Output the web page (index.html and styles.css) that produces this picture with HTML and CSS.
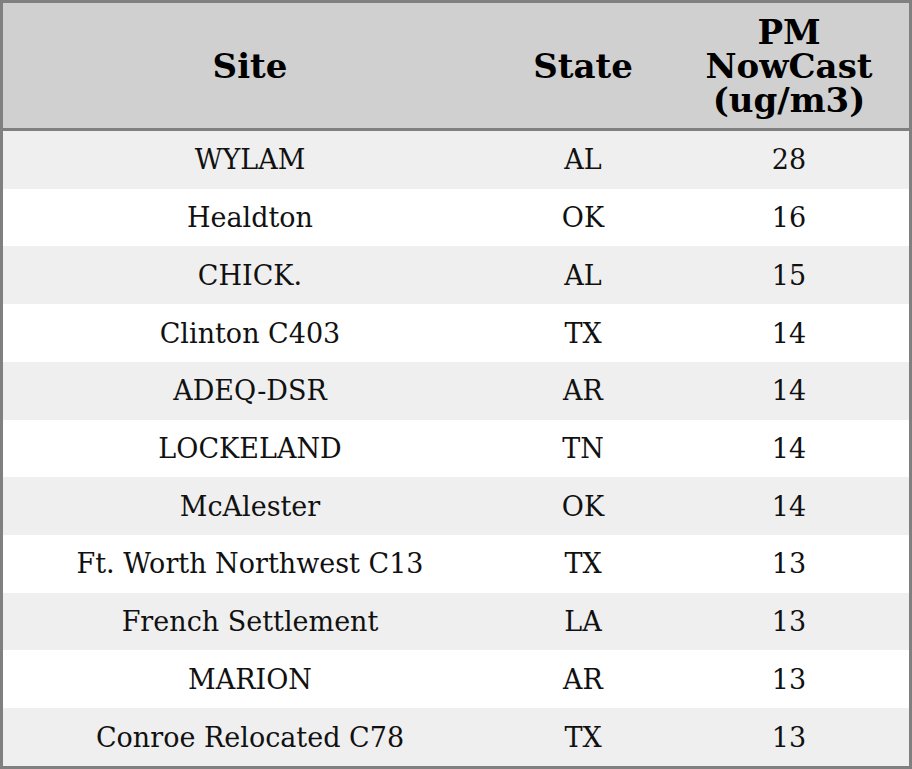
FILE: index.html
```html
<!DOCTYPE html>
<html>
<head>
<meta charset="utf-8">
<link rel="stylesheet" href="styles.css">
</head>
<body>
<table class="aq">
  <colgroup>
    <col class="c-site">
    <col class="c-state">
    <col class="c-pm">
  </colgroup>
  <thead>
    <tr><th>Site</th><th>State</th><th>PM<br>NowCast<br>(ug/m3)</th></tr>
  </thead>
  <tbody>
    <tr><td>WYLAM</td><td>AL</td><td>28</td></tr>
    <tr><td>Healdton</td><td>OK</td><td>16</td></tr>
    <tr><td>CHICK.</td><td>AL</td><td>15</td></tr>
    <tr><td>Clinton C403</td><td>TX</td><td>14</td></tr>
    <tr><td>ADEQ-DSR</td><td>AR</td><td>14</td></tr>
    <tr><td>LOCKELAND</td><td>TN</td><td>14</td></tr>
    <tr><td>McAlester</td><td>OK</td><td>14</td></tr>
    <tr><td>Ft. Worth Northwest C13</td><td>TX</td><td>13</td></tr>
    <tr><td>French Settlement</td><td>LA</td><td>13</td></tr>
    <tr><td>MARION</td><td>AR</td><td>13</td></tr>
    <tr><td>Conroe Relocated C78</td><td>TX</td><td>13</td></tr>
  </tbody>
</table>
</body>
</html>
```
FILE: styles.css
```css
html, body {
  margin: 0;
  padding: 0;
  background: #ffffff;
}
.aq {
  width: 912px;
  border-collapse: separate;
  border-spacing: 0;
  border: 3px solid #808080;
  font-family: "DejaVu Serif", serif;
  color: #111111;
  table-layout: fixed;
}
.c-site { width: 494px; }
.c-state { width: 172px; }
.c-pm { width: 240px; }
.aq th {
  background: #d0d0d0;
  font-size: 34px;
  font-weight: bold;
  line-height: 34px;
  height: 128px;
  padding: 0;
  box-sizing: border-box;
  border-bottom: 3px solid #808080;
  text-align: center;
  vertical-align: middle;
  color: #000000;
}
.aq td {
  font-size: 27px;
  height: 57.73px;
  padding: 0;
  box-sizing: border-box;
  text-align: center;
  vertical-align: middle;
}
.aq tbody tr:nth-child(odd) td { background: #efefef; }
.aq tbody tr:nth-child(even) td { background: #ffffff; }
```
